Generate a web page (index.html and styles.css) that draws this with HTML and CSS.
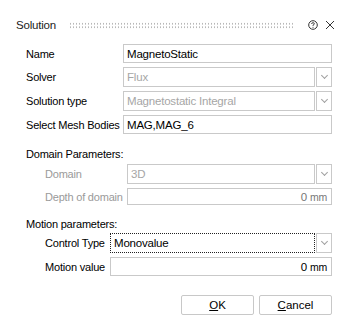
FILE: index.html
```html
<!DOCTYPE html>
<html lang="en">
<head>
    <meta charset="UTF-8">
    <title>Solution</title>
    <link rel="stylesheet" href="styles.css">
</head>
<body>
    <div class="dialog">
        <header class="titlebar">
            <span class="title">Solution</span>
            <span class="grip"></span>
            <svg class="help" width="10" height="10" viewBox="0 0 10 10">
                <circle cx="5" cy="5" r="4.3" fill="none" stroke="#333" stroke-width="1"/>
                <path d="M3.6 4 Q3.6 2.7 5 2.7 Q6.4 2.7 6.4 3.8 Q6.4 4.6 5 5.1 L5 5.9" fill="none" stroke="#333" stroke-width="0.9"/>
                <circle cx="5" cy="7.3" r="0.55" fill="#333"/>
            </svg>
            <svg class="close" width="10" height="10" viewBox="0 0 10 10">
                <path d="M1 1 L9 9 M9 1 L1 9" stroke="#333" stroke-width="1"/>
            </svg>
        </header>

        <section class="fields main">
            <div class="row">
                <label>Name</label>
                <div class="field text">MagnetoStatic</div>
            </div>
            <div class="row combo-row">
                <label>Solver</label>
                <div class="combo disabled">
                    <div class="field">Flux</div>
                    <div class="drop"><span class="chev"></span></div>
                </div>
            </div>
            <div class="row combo-row">
                <label>Solution type</label>
                <div class="combo disabled">
                    <div class="field">Magnetostatic Integral</div>
                    <div class="drop"><span class="chev"></span></div>
                </div>
            </div>
            <div class="row">
                <label>Select Mesh Bodies</label>
                <div class="field text">MAG,MAG_6</div>
            </div>
        </section>

        <section class="group domain">
            <h3>Domain Parameters:</h3>
            <div class="row combo-row">
                <label class="muted">Domain</label>
                <div class="combo disabled">
                    <div class="field">3D</div>
                    <div class="drop"><span class="chev"></span></div>
                </div>
            </div>
            <div class="row short">
                <label class="muted">Depth of domain</label>
                <div class="field number">0 <span class="unit">mm</span></div>
            </div>
        </section>

        <section class="group motion">
            <h3>Motion parameters:</h3>
            <div class="row combo-row">
                <label>Control Type</label>
                <div class="combo">
                    <div class="field focused">Monovalue</div>
                    <div class="drop"><span class="chev"></span></div>
                </div>
            </div>
            <div class="row">
                <label>Motion value</label>
                <div class="field number">0 <span class="unit">mm</span></div>
            </div>
        </section>

        <footer class="buttons">
            <button><u>O</u>K</button>
            <button><u>C</u>ancel</button>
        </footer>
    </div>
</body>
</html>
```

FILE: styles.css
```css
body {
    margin: 0;
    background-color: #fff;
    font-family: "Liberation Sans", Arial, sans-serif;
    font-size: 11px;
    letter-spacing: -0.2px;
    color: #000;
}
.dialog {
    width: 355px;
    height: 336px;
    box-sizing: border-box;
    padding: 15px 23px 0 26px;
}
.titlebar {
    display: flex;
    align-items: center;
    height: 20px;
    margin-left: -10px;
}
.title {
    color: #222;
    font-size: 11.5px;
}
.grip {
    flex: 1;
    height: 7px;
    margin: 0 14px 0 13px;
    background-image: radial-gradient(circle, #b8b8b8 0.8px, transparent 1px);
    background-size: 3px 3.5px;
}
.help {
    margin-right: 7px;
}
.close {
    margin-right: -3px;
}
.fields {
    margin-top: 9px;
}
.row {
    display: flex;
    align-items: center;
    height: 19px;
    margin-bottom: 4px;
}
.row.combo-row {
    height: 20px;
}
.row.short {
    height: 17px;
}
.row label {
    flex: 0 0 97px;
    white-space: nowrap;
}
.field {
    flex: 1;
    height: 100%;
    box-sizing: border-box;
    border: 1px solid #c9c9c9;
    padding: 0 3px;
    display: flex;
    align-items: center;
    white-space: nowrap;
    font-size: 11.5px;
}
.field.number {
    justify-content: flex-end;
    padding-right: 4px;
}
.unit {
    margin-left: 3px;
    font-size: 10.5px;
}
.combo {
    flex: 1;
    display: flex;
    height: 100%;
    gap: 1px;
}
.combo .drop {
    width: 16px;
    box-sizing: border-box;
    border: 1px solid #c9c9c9;
    display: flex;
    align-items: center;
    justify-content: center;
}
.chev {
    width: 4px;
    height: 4px;
    border-right: 1px solid #a0a0a0;
    border-bottom: 1px solid #a0a0a0;
    transform: rotate(45deg);
    margin-top: -3px;
}
.disabled .field {
    color: #a6a6a6;
}
.field.focused {
    border: 1px dotted #222;
}
.muted {
    color: #9a9a9a;
}
.group h3 {
    font-size: 11px;
    font-weight: normal;
    margin: 0;
    height: 17px;
    line-height: 17px;
}
.domain {
    margin-top: 12px;
}
.domain h3 {
    margin-bottom: 1px;
}
.domain .row {
    padding-left: 19px;
}
.domain .row label {
    flex-basis: 82px;
}
.domain .row .field.number {
    color: #777;
}
.motion {
    margin-top: 11px;
}
.motion .row {
    padding-left: 19px;
}
.motion .row label {
    flex-basis: 65px;
}
.buttons {
    display: flex;
    justify-content: flex-end;
    gap: 5px;
    margin-top: 19px;
}
.buttons button {
    width: 73px;
    height: 20px;
    background-color: #fff;
    border: 1px solid #c8c8c8;
    border-radius: 2px;
    font-family: inherit;
    font-size: 11.5px;
    color: #000;
    padding: 0;
}
```
